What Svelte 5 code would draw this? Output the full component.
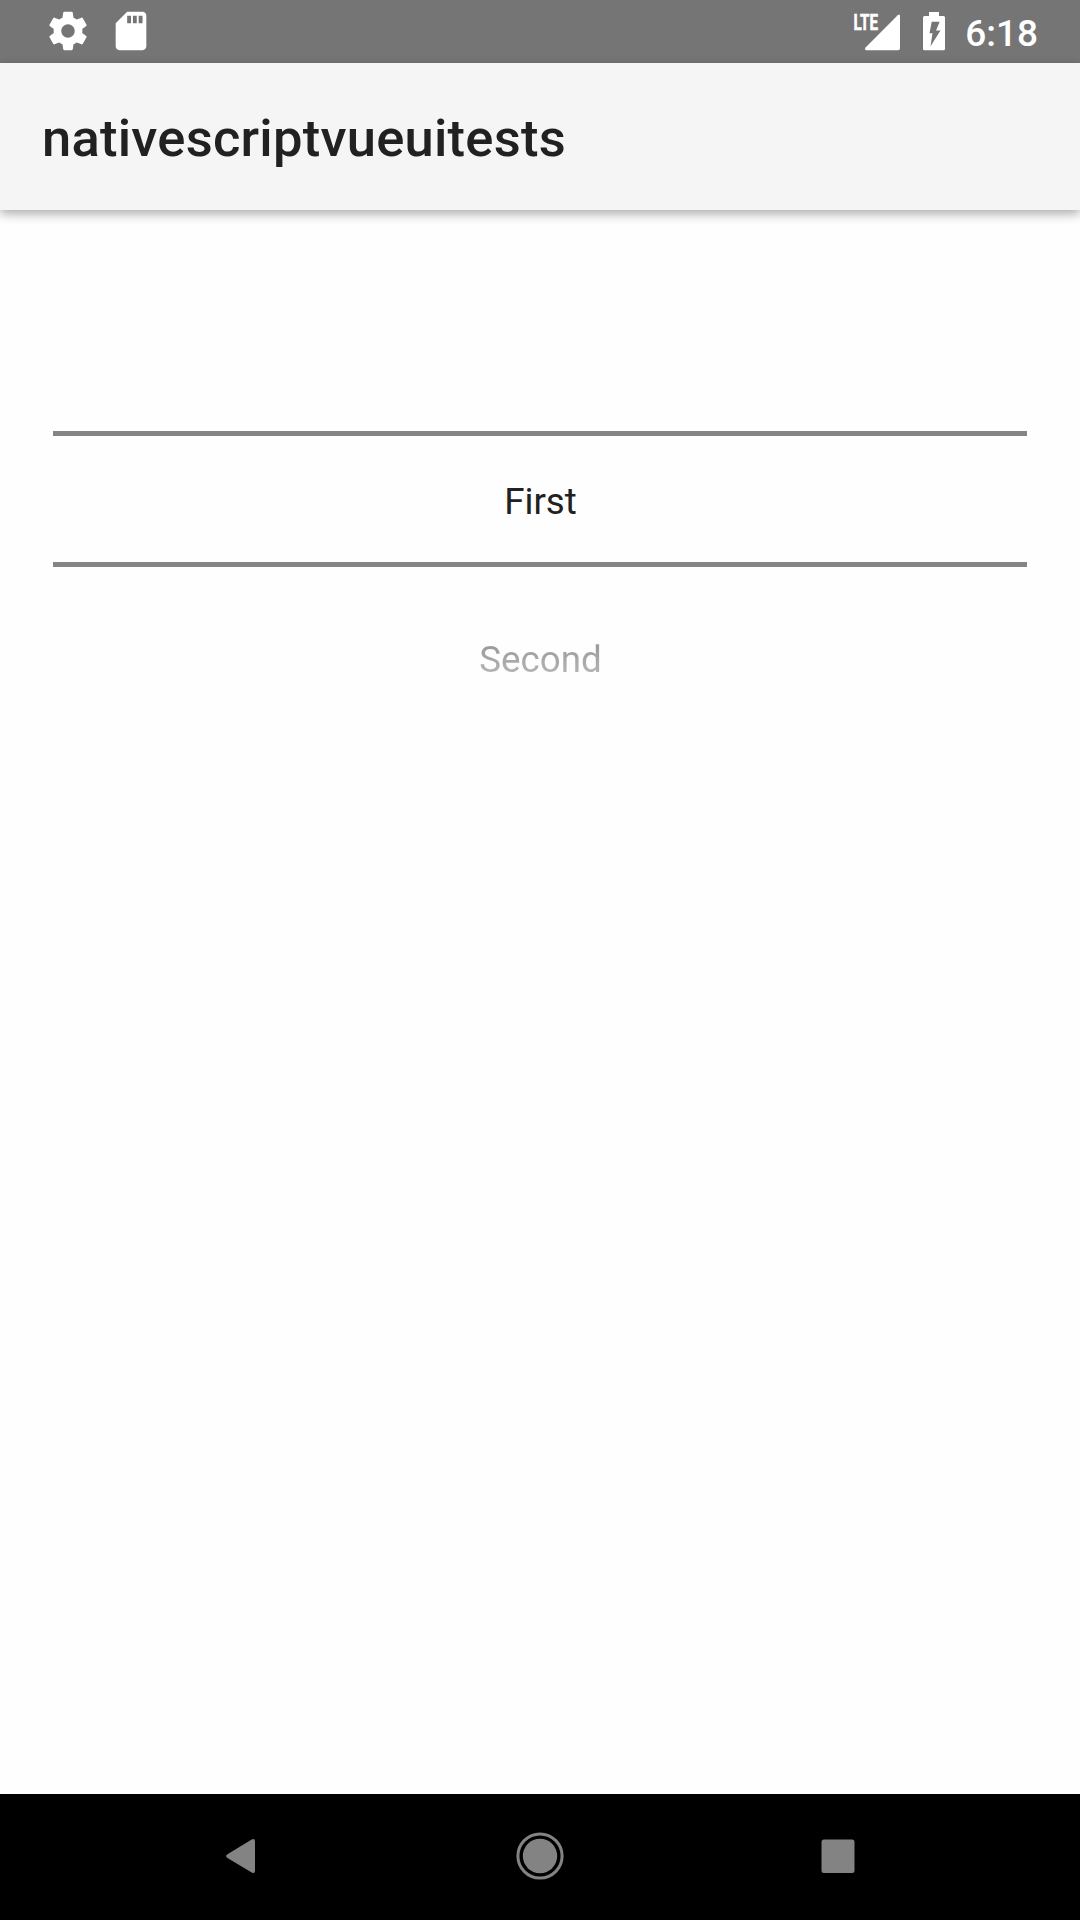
<script>
  const title = 'nativescriptvueuitests';
  const items = ['First', 'Second'];
</script>

<div class="screen">
  <header class="status">
    <svg class="gear" width="46" height="46" viewBox="0 0 24 24"><path d="M19.43 12.98c.04-.32.07-.64.07-.98s-.03-.66-.07-.98l2.11-1.65c.19-.15.24-.42.12-.64l-2-3.46c-.12-.22-.39-.3-.61-.22l-2.49 1c-.52-.4-1.08-.73-1.69-.98l-.38-2.65C14.46 2.18 14.25 2 14 2h-4c-.25 0-.46.18-.49.42l-.38 2.65c-.61.25-1.17.59-1.69.98l-2.49-1c-.23-.09-.49 0-.61.22l-2 3.46c-.13.22-.07.49.12.64l2.11 1.65c-.04.32-.07.65-.07.98s.03.66.07.98l-2.11 1.65c-.19.15-.24.42-.12.64l2 3.46c.12.22.39.3.61.22l2.49-1c.52.4 1.08.73 1.69.98l.38 2.65c.03.24.24.42.49.42h4c.25 0 .46-.18.49-.42l.38-2.65c.61-.25 1.17-.59 1.69-.98l2.49 1c.23.09.49 0 .61-.22l2-3.46c.12-.22.07-.49-.12-.64l-2.11-1.65zM12 15.5c-1.93 0-3.5-1.57-3.5-3.5s1.57-3.5 3.5-3.5 3.5 1.57 3.5 3.5-1.57 3.5-3.5 3.5z" /></svg>
    <svg class="card" width="46" height="46" viewBox="0 0 24 24"><path d="M18 2h-8L4.02 8 4 20c0 1.1.9 2 2 2h12c1.1 0 2-.9 2-2V4c0-1.1-.9-2-2-2zm-6 6h-2V4h2v4zm3 0h-2V4h2v4zm3 0h-2V4h2v4z" /></svg>
    <span class="spacer"></span>
    <svg class="signal" width="48" height="42" viewBox="0 0 48 42">
      <text x="0.5" y="19.7" textLength="24.5" lengthAdjust="spacingAndGlyphs">LTE</text>
      <path d="M44.7 5.2Q47 3.4 47 6.2V38.3Q47 40.3 45 40.3H13.7Q11 40.3 12.6 37.6Z" />
    </svg>
    <svg class="battery" width="22" height="42" viewBox="0 0 22 42">
      <path fill-rule="evenodd" d="M6 2H16V6H20.5Q22 6 22 7.5V38.8Q22 40.3 20.5 40.3H1.5Q0 40.3 0 38.8V7.5Q0 6 1.5 6H6ZM8.7 11.8L6.5 23.3H9.5L7.5 36.3L17.5 20.5H13L16.7 11.8Z" />
    </svg>
    <time>6:18</time>
  </header>

  <div class="appbar"><h1>{title}</h1></div>

  <main>
    <ul>
      {#each items as item, i}
        <li class:selected={i === 0}><span>{item}</span></li>
      {/each}
    </ul>
  </main>

  <nav>
    <svg width="48" height="48" viewBox="0 0 48 48"><path d="M10.9 22L34.7 7.6Q38 6 38 9.5V38.7Q38 42.2 34.7 40.6L10.9 26.2Q7.2 24.1 10.9 22Z" /></svg>
    <svg width="48" height="48" viewBox="0 0 48 48"><circle cx="24" cy="24" r="17.2" /><circle class="ring" cx="24" cy="24" r="22.1" /></svg>
    <svg width="48" height="48" viewBox="0 0 48 48"><rect x="7.5" y="7.6" width="33" height="33.4" rx="2.5" /></svg>
  </nav>
</div>

<style>
  :global(body) { margin: 0; }
  .screen {
    width: 1080px;
    height: 1920px;
    display: flex;
    flex-direction: column;
    background: #fefefe;
    font-family: Roboto, sans-serif;
    overflow: hidden;
  }
  .status {
    height: 63px;
    flex: none;
    display: flex;
    align-items: flex-start;
    box-sizing: border-box;
    padding: 8.4px 42px 0 45.4px;
    background: #757575;
    color: #fff;
    fill: #fff;
  }
  .card { margin-left: 17px; }
  .spacer { flex: 1; }
  .signal { margin: 1.6px 22px 0 0; }
  .signal text { font-size: 22px; font-weight: 700; stroke: #fff; stroke-width: 0.6; }
  .battery { margin: 1.6px 20px 0 0; }
  time { margin-top: 0.6px; font-size: 37px; line-height: 50px; font-weight: 500; }
  .appbar {
    height: 147px;
    flex: none;
    display: flex;
    align-items: center;
    box-sizing: border-box;
    padding: 3px 42px 0;
    background: #f5f5f5;
    box-shadow: 0 4px 10px rgba(0, 0, 0, 0.32);
  }
  h1 {
    margin: 0;
    font-size: 52.5px;
    font-weight: 500;
    line-height: 62px;
    letter-spacing: 0.24px;
    color: #212121;
  }
  main { flex: 1; padding: 221px 53px 0; }
  ul { margin: 0; padding: 0; list-style: none; }
  li {
    height: 180px;
    display: flex;
    align-items: center;
    justify-content: center;
    box-sizing: border-box;
    padding: 5px 0 0 1px;
    font-size: 36.75px;
    line-height: 44px;
  }
  li span {
    background: linear-gradient(#949494, #bcbcbc);
    background-clip: text;
    color: transparent;
  }
  li.selected {
    height: 136px;
    border-top: 5px solid #858585;
    border-bottom: 5px solid #858585;
  }
  li.selected span { background: none; color: #212121; }
  nav {
    height: 126px;
    flex: none;
    display: flex;
    justify-content: space-between;
    align-items: center;
    box-sizing: border-box;
    padding: 0 218px 1.4px 217px;
    background: #000;
    fill: #838383;
  }
  .ring { fill: none; stroke: #838383; stroke-width: 3; }
</style>
